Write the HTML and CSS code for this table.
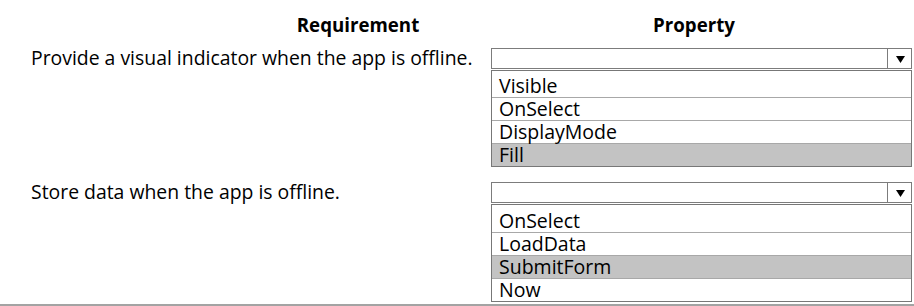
FILE: index.html
```html
<!DOCTYPE html>
<html lang="en">
<head>
<meta charset="utf-8">
<title>Requirement / Property</title>
<link rel="stylesheet" href="styles.css">
</head>
<body>
<div class="page">
  <div class="head">
    <div class="head-req">Requirement</div>
    <div class="head-prop">Property</div>
  </div>

  <div class="row">
    <div class="req">Provide a visual indicator when the app is offline.</div>
    <div class="dropdown">
      <div class="select">
        <div class="select-value"></div>
        <div class="select-arrow"><svg width="9" height="7" viewBox="0 0 9 7"><polygon points="0,0 9,0 4.5,7" fill="#000"/></svg></div>
      </div>
      <ul class="options">
        <li class="opt">Visible</li>
        <li class="opt">OnSelect</li>
        <li class="opt">DisplayMode</li>
        <li class="opt opt-sel">Fill</li>
      </ul>
    </div>
  </div>

  <div class="row row-second">
    <div class="req">Store data when the app is offline.</div>
    <div class="dropdown">
      <div class="select">
        <div class="select-value"></div>
        <div class="select-arrow"><svg width="9" height="7" viewBox="0 0 9 7"><polygon points="0,0 9,0 4.5,7" fill="#000"/></svg></div>
      </div>
      <ul class="options options-second">
        <li class="opt">OnSelect</li>
        <li class="opt">LoadData</li>
        <li class="opt opt-sel">SubmitForm</li>
        <li class="opt">Now</li>
      </ul>
    </div>
  </div>
</div>
</body>
</html>
```
FILE: styles.css
```css
html, body {
  margin: 0;
  padding: 0;
  background: #fff;
}

body {
  font-family: "Open Sans", "Noto Sans", sans-serif;
  color: #000;
  width: 914px;
  height: 306px;
  overflow: hidden;
}

.page {
  height: 304px;
  border-bottom: 2px solid #a3a3a3;
  box-sizing: content-box;
}

.head {
  display: grid;
  grid-template-columns: 491px 421px;
  padding-top: 13px;
  font-weight: 700;
  font-size: 18.7px;
  line-height: 24px;
}

.head-req {
  padding-left: 225px;
  text-align: center;
}

.head-prop {
  padding-right: 15px;
  text-align: center;
}

.row {
  display: grid;
  grid-template-columns: 491px 421px;
  margin-top: 9px;
  align-items: start;
}

.row-second {
  margin-top: 13px;
}

.req {
  padding-left: 31px;
  font-size: 19.4px;
  line-height: 24px;
}

.dropdown {
  margin-top: 2px;
}

.select {
  display: flex;
  height: 21px;
  box-sizing: border-box;
  border: 1px solid #7c7c7c;
}

.select-value {
  flex: 1;
}

.select-arrow {
  width: 24px;
  box-sizing: border-box;
  border-left: 1px solid #7c7c7c;
  display: flex;
  align-items: center;
  justify-content: center;
  padding-left: 1px;
}

.select-arrow svg {
  display: block;
  margin-top: 1px;
}

.options {
  list-style: none;
  margin: 1px 0 0;
  padding: 4px 0 0;
  border: 1px solid #777;
}

.options-second {
  padding-top: 5px;
}

.opt {
  font-size: 19.5px;
  line-height: 22px;
  height: 22px;
  padding-left: 7px;
  border-bottom: 1px solid #a8a8a8;
  white-space: nowrap;
}

.opt:last-child {
  border-bottom: 0;
}

.opt-sel {
  background: #c3c3c3;
}
```
